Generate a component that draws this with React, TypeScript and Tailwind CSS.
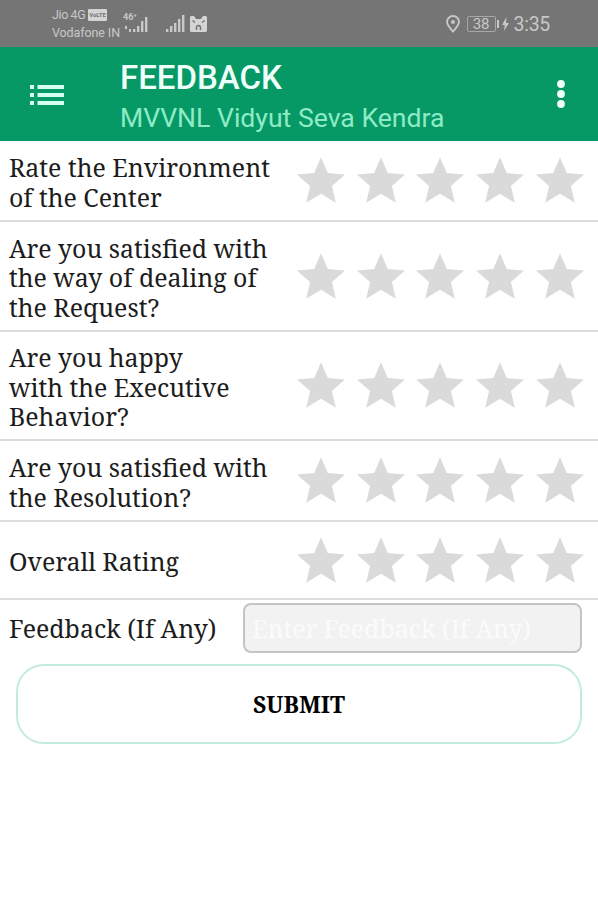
import React, { useState } from 'react';

interface Question {
  id: string;
  text: string;
  rowHeight: string;
}

const questions: Question[] = [
  { id: 'environment', text: 'Rate the Environment\nof the Center', rowHeight: 'h-[81px]' },
  { id: 'dealing', text: 'Are you satisfied with\nthe way of dealing of\nthe Request?', rowHeight: 'h-[110px]' },
  { id: 'behavior', text: 'Are you happy\nwith the Executive\nBehavior?', rowHeight: 'h-[109px]' },
  { id: 'resolution', text: 'Are you satisfied with\nthe Resolution?', rowHeight: 'h-[81px]' },
  { id: 'overall', text: 'Overall Rating', rowHeight: 'h-[78px]' },
];

const SignalBars: React.FC<{ className: string }> = ({ className }) => (
  <svg viewBox="0 0 20 17" className={className} fill="currentColor">
    <rect x="0" y="14" width="2.4" height="3" />
    <rect x="4" y="11" width="2.4" height="6" />
    <rect x="8" y="8" width="2.4" height="9" />
    <rect x="12" y="4" width="2.4" height="13" />
    <rect x="16" y="0" width="2.4" height="17" />
  </svg>
);

const StatusBar: React.FC = () => (
  <div className="flex h-[47px] items-center bg-[#757575] pl-[52px] pr-[48px] text-[#c8c8c8]">
    <div className="mt-[1px] w-[70px] shrink-0 text-[12.500px] leading-[18px] tracking-[-0.1px]">
      <div className="flex items-center whitespace-nowrap">
        <span className="w-[34px] tracking-[-0.4px]">Jio 4G</span>
        <span className="ml-[2px] flex h-[12px] w-[19px] items-center justify-center rounded-[1px] bg-[#d4d4d4] text-[6px] font-bold leading-none text-[#757575]">
          VoLTE
        </span>
      </div>
      <div className="whitespace-nowrap">Vodafone IN</div>
    </div>
    <div className="relative ml-[1px] h-[18px] w-[26px]">
      <span className="absolute left-0 top-[-2px] text-[9px] font-bold leading-none">46⁺</span>
      <svg viewBox="0 0 26 18" className="absolute inset-0 h-[18px] w-[26px]" fill="currentColor">
        <path d="M2 11h2v3H2zM6 14h2v3H6zM10 14h2.400v3H10zM14 11h2.400v6H14zM18 6h2.400v11H18zM22 2h2.400v15H22z" />
      </svg>
    </div>
    <SignalBars className="ml-[17px] h-[17px] w-[20px]" />
    <svg viewBox="0 0 17 16" className="ml-[4px] h-[16px] w-[17px]">
      <path fill="#d4d4d4" d="M1 0h3l2 3h5l2-3h3l1 1v14l-1 1H1l-1-1V1z" />
      <path fill="none" stroke="#757575" strokeWidth="1.500" d="M2.500 4.500l2.500 2M14.500 4.500l-2.500 2M6.500 14v-2a2 2.500 0 0 1 4 0v2" />
    </svg>
    <div className="ml-auto flex items-center">
      <svg viewBox="0 0 14 18" className="h-[18px] w-[14px]" fill="none" stroke="currentColor" strokeWidth="1.900">
        <path d="M7 16.500C4 13 1 10 1 6.800a6 5.800 0 0 1 12 0C13 10 10 13 7 16.500z" />
        <circle cx="7" cy="7" r="2" fill="currentColor" stroke="none" />
      </svg>
      <div className="ml-[7px] flex h-[16px] w-[29px] items-center justify-center rounded-[2px] border border-[#a8a8a8] pt-[1px] text-[15px] leading-none">
        38
      </div>
      <div className="ml-[1px] h-[8px] w-[2px] bg-[#c8c8c8]" />
      <svg viewBox="0 0 7 14" className="ml-[3px] h-[14px] w-[7px]" fill="currentColor">
        <path d="M4.500 0L0 8h2.800L2 14l5-8H4z" />
      </svg>
      <span className="ml-[5px] mt-[3px] text-[19.500px] leading-none tracking-[-0.3px]">3:35</span>
    </div>
  </div>
);

const AppHeader: React.FC = () => (
  <header className="flex h-[94px] items-center bg-[#069965] pl-[30px] pr-[33px]">
    <button type="button" aria-label="Menu" className="mt-[1px] shrink-0 text-[#d5fff0]">
      <svg viewBox="0 0 34 20" className="h-[20px] w-[34px]" fill="currentColor">
        <path d="M0 0h4v4H0zM0 8h4v4H0zM0 16h4v4H0zM7.500 0H34v4H7.500zM7.500 8H34v4H7.500zM7.500 16H34v4H7.500z" />
      </svg>
    </button>
    <div className="ml-[56px] mt-[8px] whitespace-nowrap">
      <h1 className="text-[33px] font-medium leading-[40px] text-[#effff9]">FEEDBACK</h1>
      <p className="text-[26.600px] leading-[40px] text-[#8eebc5]">MVVNL Vidyut Seva Kendra</p>
    </div>
    <button type="button" aria-label="More options" className="ml-auto text-[#effff9]">
      <svg viewBox="0 0 8 28" className="h-[28px] w-[8px]" fill="currentColor">
        <circle cx="4" cy="4" r="3.900" />
        <circle cx="4" cy="14" r="3.900" />
        <circle cx="4" cy="24" r="3.900" />
      </svg>
    </button>
  </header>
);

const StarRating: React.FC<{ value: number; onChange: (value: number) => void }> = ({ value, onChange }) => (
  <div className="mb-[1px] flex shrink-0 gap-[11.800px]">
    {[1, 2, 3, 4, 5].map(star => (
      <button key={star} type="button" aria-label={`${star} stars`} onClick={() => onChange(star)}>
        <svg
          viewBox="2 2 20 19"
          className={`block h-[46px] w-[48px] ${star <= value ? 'text-[#069965]' : 'text-[#dadada]'}`}
          fill="currentColor"
        >
          <path d="M12 17.270L18.180 21l-1.640-7.030L22 9.240l-7.190-.61L12 2 9.190 8.630 2 9.240l5.460 4.730L5.820 21z" />
        </svg>
      </button>
    ))}
  </div>
);

const App: React.FC = () => {
  const [ratings, setRatings] = useState<Record<string, number>>({});
  const [feedback, setFeedback] = useState('');

  return (
    <div className="min-h-[900px] w-[598px] bg-white font-['Roboto',sans-serif]">
      <StatusBar />
      <AppHeader />
      <form
        className="font-['Noto_Serif','DejaVu_Serif',serif] text-[24.900px] leading-[29.500px] text-[#1c1c1c]"
        onSubmit={e => e.preventDefault()}
      >
        {questions.map(question => (
          <div
            key={question.id}
            className={`flex items-center justify-between border-b-2 border-[#dcdcdc] pl-[9px] pr-[14px] ${question.rowHeight}`}
          >
            <p className="mt-[4px] whitespace-pre">{question.text}</p>
            <StarRating
              value={ratings[question.id] ?? 0}
              onChange={value => setRatings(prev => ({ ...prev, [question.id]: value }))}
            />
          </div>
        ))}
        <div className="flex items-center justify-between pl-[9px] pr-[16px] pt-[3px]">
          <label htmlFor="feedback" className="mt-[2px] whitespace-nowrap">Feedback (If Any)</label>
          <input
            id="feedback"
            value={feedback}
            onChange={e => setFeedback(e.target.value)}
            placeholder="Enter Feedback (If Any)"
            className="h-[50px] w-[339px] rounded-[8px] border-2 border-[#c4c4c4] bg-[#f2f2f2] px-[7px] placeholder:text-[#fbfbfb]"
          />
        </div>
        <button
          type="submit"
          className="ml-[16px] mt-[11px] block h-[80px] w-[566px] rounded-[28px] border-2 border-[#c3ebe0] bg-white pt-[2px] text-[23px] font-bold text-black"
        >
          SUBMIT
        </button>
      </form>
    </div>
  );
};

export default App;
